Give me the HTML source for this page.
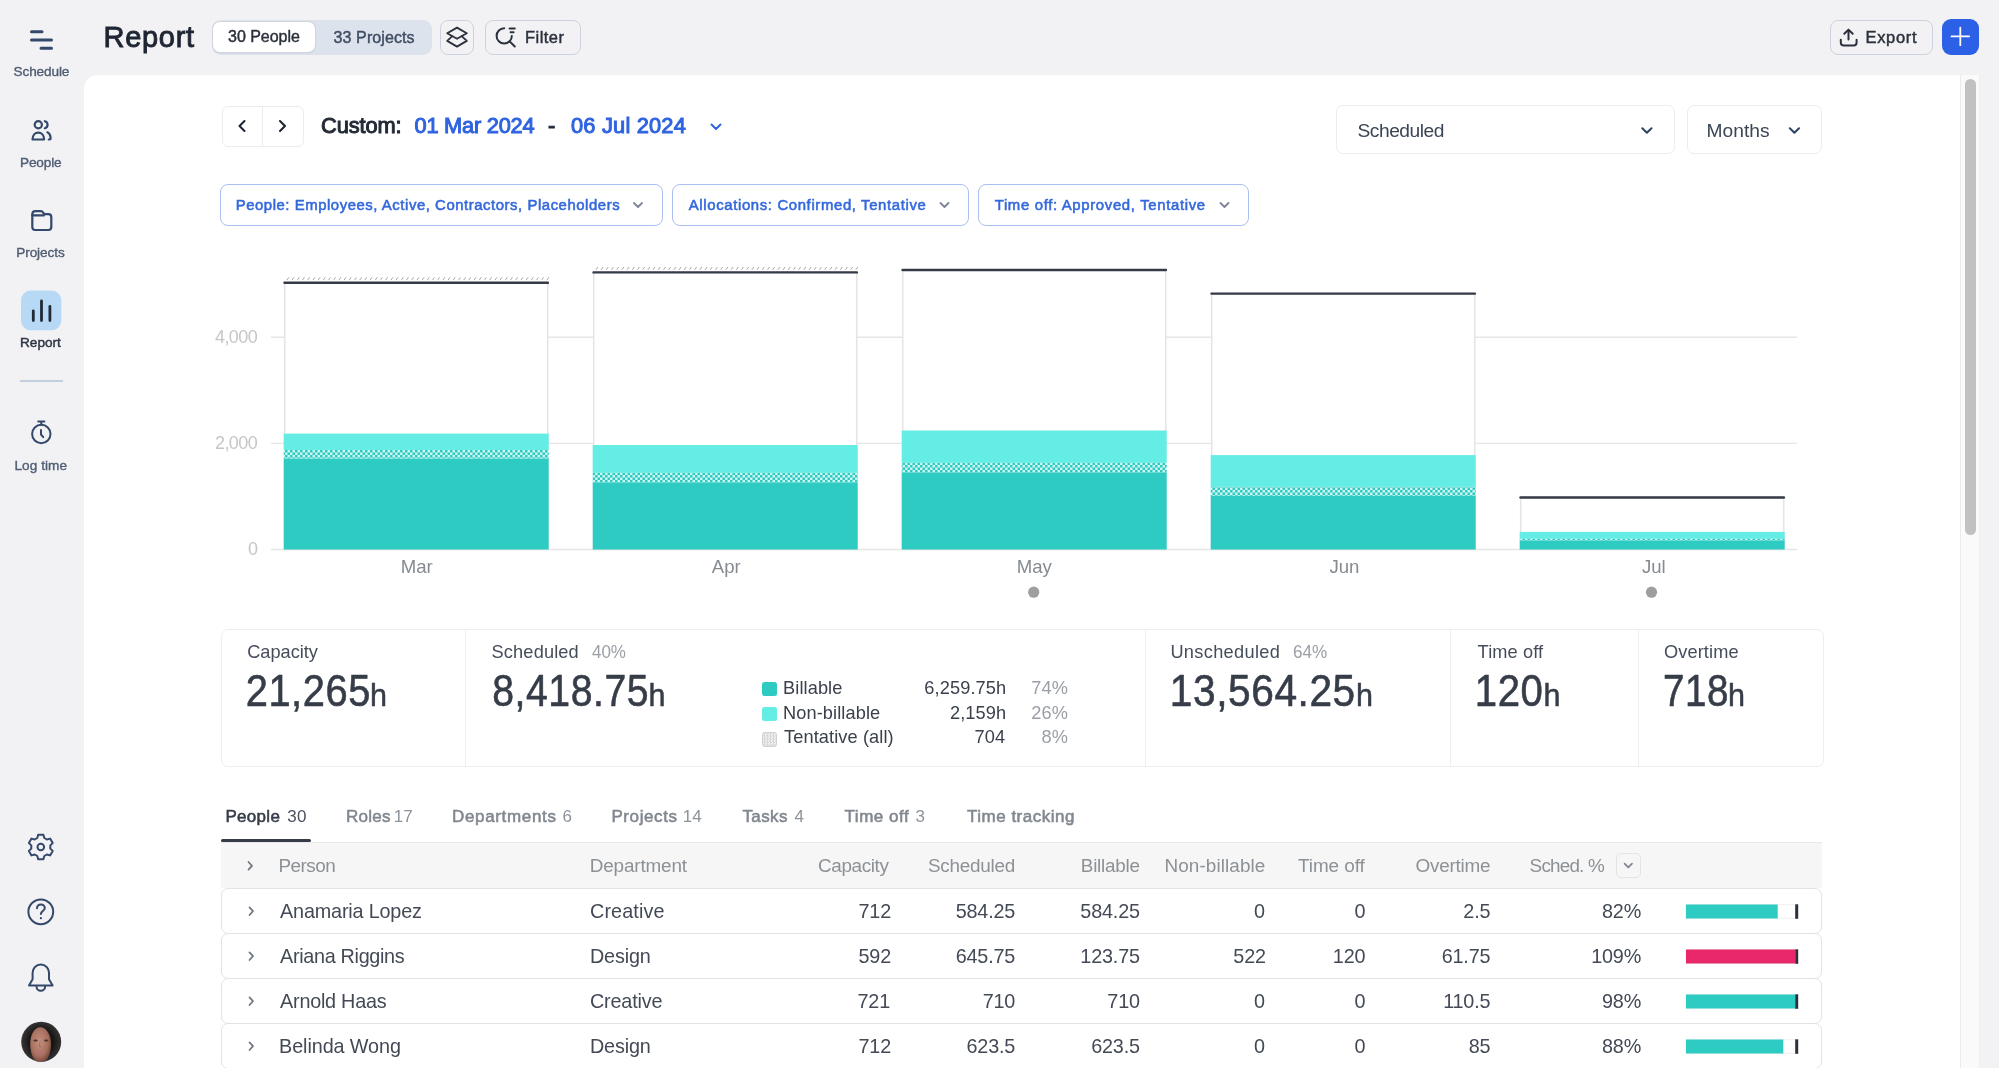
<!DOCTYPE html>
<html><head><meta charset="utf-8">
<style>
*{box-sizing:border-box;margin:0;padding:0}
html,body{width:1999px;height:1068px;overflow:hidden;background:#f2f2f5;font-family:"Liberation Sans",sans-serif}
.box{position:absolute}
svg.layer{position:absolute;left:0;top:0;overflow:visible}
</style></head><body>
<!-- MAIN PANEL -->
<div class="box" style="left:84px;top:75px;width:1876px;height:1000px;background:#fff;border-top-left-radius:14px"></div>
<!-- SCROLLBAR -->
<div class="box" style="left:1960px;top:75px;width:1px;height:993px;background:#ebebeb"></div>
<div class="box" style="left:1961px;top:75px;width:18px;height:993px;background:#fafafa"></div>
<div class="box" style="left:1979px;top:75px;width:1px;height:993px;background:#efefef"></div>
<div class="box" style="left:1965px;top:79px;width:11px;height:456px;border-radius:6px;background:#c1c1c1"></div>

<!-- SIDEBAR ICONS -->
<svg class="layer" width="84" height="1068" fill="none" stroke="#33486a" stroke-width="2.2" stroke-linecap="round" stroke-linejoin="round">
 <path d="M31.5 31.7h10.5M31.5 40h20M41 48.2h10.5" stroke-width="3"/>
 <circle cx="38.3" cy="124.7" r="3.6"/>
 <path d="M44.8 121.2a3.6 3.6 0 0 1 0 7"/>
 <path d="M32.5 139.5c0-4.2 2.6-6.8 5.8-6.8s5.8 2.6 5.8 6.8z"/>
 <path d="M47.4 132.3c1.9 1 3.2 3.6 3.2 6.2 0 .6-.4 1-1 1h-.8"/>
 <path d="M32.3 214.5c0-2 1.2-3.3 3.2-3.3h5.4c.9 0 1.6.4 2.1 1.1l1.2 1.9h4.2c1.7 0 2.9 1.3 2.9 3v9.8c0 1.8-1.2 3-3 3H35.3c-1.8 0-3-1.2-3-3z"/>
 <path d="M32.3 215.4h11.6"/>
 <rect x="21" y="290.6" width="40.3" height="39.6" rx="9.5" fill="#b7d9f5" stroke="none"/>
 <path d="M33.3 311v9.5M41.5 301v19.5M49.9 306.5v14" stroke="#222a36" stroke-width="2.8"/>
 <path d="M20 381h43" stroke="#c3cfde" stroke-width="2" stroke-linecap="butt"/>
 <circle cx="41.3" cy="434" r="9.2" stroke-width="2"/>
 <path d="M38.2 421.6h6.2M41.3 421.6v3.2M41 430v4.5l2.3 2.6" stroke-width="2"/>
 <g transform="translate(40.8 847)" stroke-width="2">
  <path d="M-2.6 -12.2h5.2l.9 3.2 2.6 1.5 3.2-.9 2.6 4.5-2.4 2.3v3.2l2.4 2.3-2.6 4.5-3.2-.9-2.6 1.5-.9 3.2h-5.2l-.9-3.2-2.6-1.5-3.2.9-2.6-4.5 2.4-2.3v-3.2l-2.4-2.3 2.6-4.5 3.2.9 2.6-1.5z"/>
  <circle r="3.3"/>
 </g>
 <circle cx="40.8" cy="911.8" r="12.4" stroke-width="2"/>
 <path d="M37 908.3c0-2.2 1.7-3.8 3.9-3.8s3.9 1.5 3.9 3.6c0 2.8-3.9 3-3.9 5.8" stroke-width="2"/>
 <circle cx="40.9" cy="918.2" r="1.1" fill="#33486a" stroke="none"/>
 <path d="M29 985.5h23.6l-3.6-6.2v-6.5c0-4.6-3.6-8.3-8.2-8.3s-8.2 3.7-8.2 8.3v6.5z" stroke-width="2"/>
 <path d="M36.5 986.5a4.3 4.3 0 0 0 8.6 0" stroke-width="2"/>
</svg>
<svg class="layer" width="84" height="1068">
 <defs>
  <clipPath id="avc"><circle cx="41.2" cy="1041.8" r="20"/></clipPath>
  <radialGradient id="skin" cx="0.45" cy="0.42" r="0.62"><stop offset="0" stop-color="#c4907f"/><stop offset="0.65" stop-color="#a76f5e"/><stop offset="1" stop-color="#6a4034"/></radialGradient>
  <radialGradient id="hair" cx="0.5" cy="0.5" r="0.5"><stop offset="0.55" stop-color="#161313"/><stop offset="1" stop-color="#383636"/></radialGradient>
 </defs>
 <g clip-path="url(#avc)">
  <rect x="21" y="1021" width="41" height="42" fill="url(#hair)"/>
  <path d="M30.2 1044c0-10 4.5-16.8 10.2-16.8s10.7 6.8 10.7 16.8c0 9-3.2 18.5-10.5 18.5s-10.4-9.5-10.4-18.5z" fill="url(#skin)"/>
  <ellipse cx="35.6" cy="1040.6" rx="2.2" ry="1" fill="#4a3534"/>
  <ellipse cx="46.2" cy="1040.6" rx="2.2" ry="1" fill="#4a3534"/>
  <path d="M40.2 1041l-0.9 5.2 2 0.9" stroke="#8f5a4a" stroke-width="0.8" fill="none" opacity="0.7"/>
  <ellipse cx="41" cy="1052.2" rx="3.6" ry="1.3" fill="#b56f78"/>
 </g>
</svg>
<!-- HEADER CONTROLS -->
<div class="box" style="left:212px;top:20px;width:220px;height:35px;border-radius:9px;background:#dde3ec"></div>
<div class="box" style="left:213px;top:22px;width:102px;height:30px;border-radius:7px;background:#fff;box-shadow:0 0 0 1px #cfd6e0,0 1px 2px rgba(0,0,0,.12)"></div>
<div class="box" style="left:440px;top:20px;width:34px;height:35px;border-radius:8px;border:1px solid #ccd3de"></div>
<div class="box" style="left:485px;top:20px;width:96px;height:35px;border-radius:8px;border:1px solid #ccd3de"></div>
<div class="box" style="left:1830px;top:20px;width:103px;height:35px;border-radius:8px;border:1px solid #ccd3de"></div>
<div class="box" style="left:1942px;top:19px;width:37px;height:36px;border-radius:9px;background:#2c60e6"></div>
<svg class="layer" width="1999" height="1068" fill="none" stroke-linecap="round" stroke-linejoin="round">
 <g stroke="#2b313c" stroke-width="2">
  <path d="M457 27.6l9.8 5.7-9.8 5.5-9.8-5.5z" stroke-width="1.8"/><path d="M452.3 36.2l-5.1 4.7 9.8 5.7 9.8-5.7-5.1-4.7" stroke-width="1.8"/>
  <path d="M504.2 28.3A7.6 7.6 0 1 0 511.8 35.9" stroke-width="2"/><path d="M509.6 28.4h5.2M510.6 32.2h3M509.9 41.6l4.9 4.9" stroke-width="2"/>
  <path d="M1840.8 39.8v2.6c0 1.8 1.2 3 3 3h9.8c1.8 0 3-1.2 3-3v-2.6M1848.5 39.5V29.8M1844.3 33.8l4.2-4.2 4.2 4.2" stroke-width="2"/>
 </g>
 <path d="M1960.3 27.6v17.6M1951.5 36.4h17.6" stroke="#fff" stroke-width="1.8"/>
 <!-- date nav chevrons -->
 <path d="M244.5 121l-5 5 5 5M280 121l5 5-5 5" stroke="#1b2130" stroke-width="2"/>
 <path d="M711.5 124.5l4.5 4.5 4.5-4.5" stroke="#2f63e0" stroke-width="2"/>
 <path d="M1642.3 128.2l4.6 4.6 4.6-4.6M1789.8 128.2l4.6 4.6 4.6-4.6" stroke="#2f4566" stroke-width="2"/>
 <path d="M634 203l4 4 4-4M940.5 203l4 4 4-4M1220.5 203l4 4 4-4" stroke="#7d8596" stroke-width="1.8"/>
</svg>

<!-- DATE ROW -->
<div class="box" style="left:221.5px;top:105.5px;width:82px;height:41.5px;border:1px solid #ececec;border-radius:6px"></div>
<div class="box" style="left:261.5px;top:106px;width:1px;height:40.5px;background:#ececec"></div>
<div class="box" style="left:1336px;top:105px;width:338.5px;height:49px;border:1px solid #ebedf1;border-radius:7px"></div>
<div class="box" style="left:1687px;top:105px;width:134.5px;height:49px;border:1px solid #ebedf1;border-radius:7px"></div>
<!-- CHIPS -->
<div class="box" style="left:220.3px;top:184px;width:442.8px;height:41.6px;border:1.8px solid #abbef4;border-radius:8px"></div>
<div class="box" style="left:671.8px;top:184px;width:296.8px;height:41.6px;border:1.8px solid #abbef4;border-radius:8px"></div>
<div class="box" style="left:978px;top:184px;width:270.8px;height:41.6px;border:1.8px solid #abbef4;border-radius:8px"></div>

<!-- <defs><pattern id="chk" width="5" height="5" patternUnits="userSpaceOnUse" x="0" y="0"><rect width="5" height="5" fill="#cdf5f1"/><rect width="2.5" height="2.5" fill="#2ecbc3"/><rect x="2.5" y="2.5" width="2.5" height="2.5" fill="#2ecbc3"/></pattern>
<pattern id="hat" width="5.2" height="10" patternUnits="userSpaceOnUse"><path d="M1.2 3.4L3 0.6" stroke="#b9b9b9" stroke-width="0.9"/></pattern></defs>
<path d="M271 337.25H1797" stroke="#e6e6e6" stroke-width="1.3"/>
<path d="M271 443.40H1797" stroke="#e6e6e6" stroke-width="1.3"/>
<path d="M271 549.50H1797" stroke="#e6e6e6" stroke-width="1.3"/>
<rect x="284.7" y="282.7" width="263.0" height="266.8" fill="#fff" stroke="#e5e5e5" stroke-width="1.6"/>
<path d="M286.90 280.10l1.9 -2.8M292.10 280.10l1.9 -2.8M297.30 280.10l1.9 -2.8M302.50 280.10l1.9 -2.8M307.70 280.10l1.9 -2.8M312.90 280.10l1.9 -2.8M318.10 280.10l1.9 -2.8M323.30 280.10l1.9 -2.8M328.50 280.10l1.9 -2.8M333.70 280.10l1.9 -2.8M338.90 280.10l1.9 -2.8M344.10 280.10l1.9 -2.8M349.30 280.10l1.9 -2.8M354.50 280.10l1.9 -2.8M359.70 280.10l1.9 -2.8M364.90 280.10l1.9 -2.8M370.10 280.10l1.9 -2.8M375.30 280.10l1.9 -2.8M380.50 280.10l1.9 -2.8M385.70 280.10l1.9 -2.8M390.90 280.10l1.9 -2.8M396.10 280.10l1.9 -2.8M401.30 280.10l1.9 -2.8M406.50 280.10l1.9 -2.8M411.70 280.10l1.9 -2.8M416.90 280.10l1.9 -2.8M422.10 280.10l1.9 -2.8M427.30 280.10l1.9 -2.8M432.50 280.10l1.9 -2.8M437.70 280.10l1.9 -2.8M442.90 280.10l1.9 -2.8M448.10 280.10l1.9 -2.8M453.30 280.10l1.9 -2.8M458.50 280.10l1.9 -2.8M463.70 280.10l1.9 -2.8M468.90 280.10l1.9 -2.8M474.10 280.10l1.9 -2.8M479.30 280.10l1.9 -2.8M484.50 280.10l1.9 -2.8M489.70 280.10l1.9 -2.8M494.90 280.10l1.9 -2.8M500.10 280.10l1.9 -2.8M505.30 280.10l1.9 -2.8M510.50 280.10l1.9 -2.8M515.70 280.10l1.9 -2.8M520.90 280.10l1.9 -2.8M526.10 280.10l1.9 -2.8M531.30 280.10l1.9 -2.8M536.50 280.10l1.9 -2.8M541.70 280.10l1.9 -2.8M546.90 280.10l1.9 -2.8" stroke="#a8a8a8" stroke-width="1" fill="none"/>
<rect x="283.7" y="433.60" width="265" height="16.40" fill="#64ede4"/>
<rect x="283.7" y="450.00" width="265" height="8.60" fill="url(#chk)"/>
<rect x="283.7" y="458.60" width="265" height="90.90" fill="#2ecbc3"/>
<path d="M284.5 282.70H547.9" stroke="#343a46" stroke-width="2.4" stroke-linecap="round"/>
<rect x="593.7" y="272.4" width="263.0" height="277.1" fill="#fff" stroke="#e5e5e5" stroke-width="1.6"/>
<path d="M595.90 269.80l1.9 -2.8M601.10 269.80l1.9 -2.8M606.30 269.80l1.9 -2.8M611.50 269.80l1.9 -2.8M616.70 269.80l1.9 -2.8M621.90 269.80l1.9 -2.8M627.10 269.80l1.9 -2.8M632.30 269.80l1.9 -2.8M637.50 269.80l1.9 -2.8M642.70 269.80l1.9 -2.8M647.90 269.80l1.9 -2.8M653.10 269.80l1.9 -2.8M658.30 269.80l1.9 -2.8M663.50 269.80l1.9 -2.8M668.70 269.80l1.9 -2.8M673.90 269.80l1.9 -2.8M679.10 269.80l1.9 -2.8M684.30 269.80l1.9 -2.8M689.50 269.80l1.9 -2.8M694.70 269.80l1.9 -2.8M699.90 269.80l1.9 -2.8M705.10 269.80l1.9 -2.8M710.30 269.80l1.9 -2.8M715.50 269.80l1.9 -2.8M720.70 269.80l1.9 -2.8M725.90 269.80l1.9 -2.8M731.10 269.80l1.9 -2.8M736.30 269.80l1.9 -2.8M741.50 269.80l1.9 -2.8M746.70 269.80l1.9 -2.8M751.90 269.80l1.9 -2.8M757.10 269.80l1.9 -2.8M762.30 269.80l1.9 -2.8M767.50 269.80l1.9 -2.8M772.70 269.80l1.9 -2.8M777.90 269.80l1.9 -2.8M783.10 269.80l1.9 -2.8M788.30 269.80l1.9 -2.8M793.50 269.80l1.9 -2.8M798.70 269.80l1.9 -2.8M803.90 269.80l1.9 -2.8M809.10 269.80l1.9 -2.8M814.30 269.80l1.9 -2.8M819.50 269.80l1.9 -2.8M824.70 269.80l1.9 -2.8M829.90 269.80l1.9 -2.8M835.10 269.80l1.9 -2.8M840.30 269.80l1.9 -2.8M845.50 269.80l1.9 -2.8M850.70 269.80l1.9 -2.8M855.90 269.80l1.9 -2.8" stroke="#a8a8a8" stroke-width="1" fill="none"/>
<rect x="592.7" y="445.00" width="265" height="27.90" fill="#64ede4"/>
<rect x="592.7" y="472.90" width="265" height="9.50" fill="url(#chk)"/>
<rect x="592.7" y="482.40" width="265" height="67.10" fill="#2ecbc3"/>
<path d="M593.5 272.40H856.9" stroke="#343a46" stroke-width="2.4" stroke-linecap="round"/>
<rect x="902.7" y="270.0" width="263.0" height="279.5" fill="#fff" stroke="#e5e5e5" stroke-width="1.6"/>
<rect x="901.7" y="430.50" width="265" height="32.40" fill="#64ede4"/>
<rect x="901.7" y="462.90" width="265" height="9.50" fill="url(#chk)"/>
<rect x="901.7" y="472.40" width="265" height="77.10" fill="#2ecbc3"/>
<path d="M902.5 270.00H1165.9" stroke="#343a46" stroke-width="2.4" stroke-linecap="round"/>
<rect x="1211.7" y="293.6" width="263.0" height="255.9" fill="#fff" stroke="#e5e5e5" stroke-width="1.6"/>
<rect x="1210.7" y="455.10" width="265" height="31.80" fill="#64ede4"/>
<rect x="1210.7" y="486.90" width="265" height="8.80" fill="url(#chk)"/>
<rect x="1210.7" y="495.70" width="265" height="53.80" fill="#2ecbc3"/>
<path d="M1211.5 293.60H1474.9" stroke="#343a46" stroke-width="2.4" stroke-linecap="round"/>
<rect x="1520.7" y="497.5" width="263.0" height="52.0" fill="#fff" stroke="#e5e5e5" stroke-width="1.6"/>
<rect x="1519.7" y="531.90" width="265" height="7.00" fill="#64ede4"/>
<rect x="1519.7" y="538.90" width="265" height="1.50" fill="url(#chk)"/>
<rect x="1519.7" y="540.40" width="265" height="9.10" fill="#2ecbc3"/>
<path d="M1520.5 497.50H1783.9" stroke="#343a46" stroke-width="2.4" stroke-linecap="round"/>
<circle cx="1033.7" cy="592.2" r="5.6" fill="#9e9e9e"/><circle cx="1651.5" cy="592.2" r="5.6" fill="#9e9e9e"/> -->
<svg class="layer" width="1999" height="1068">
<defs><pattern id="chk" width="5" height="5" patternUnits="userSpaceOnUse" x="0" y="0"><rect width="5" height="5" fill="#cdf5f1"/><rect width="2.5" height="2.5" fill="#2ecbc3"/><rect x="2.5" y="2.5" width="2.5" height="2.5" fill="#2ecbc3"/></pattern>
<pattern id="hat" width="5.2" height="10" patternUnits="userSpaceOnUse"><path d="M1.2 3.4L3 0.6" stroke="#b9b9b9" stroke-width="0.9"/></pattern></defs>
<path d="M271 337.25H1797" stroke="#e6e6e6" stroke-width="1.3"/>
<path d="M271 443.40H1797" stroke="#e6e6e6" stroke-width="1.3"/>
<path d="M271 549.50H1797" stroke="#e6e6e6" stroke-width="1.3"/>
<rect x="284.7" y="282.7" width="263.0" height="266.8" fill="#fff" stroke="#e5e5e5" stroke-width="1.6"/>
<path d="M286.90 280.10l1.9 -2.8M292.10 280.10l1.9 -2.8M297.30 280.10l1.9 -2.8M302.50 280.10l1.9 -2.8M307.70 280.10l1.9 -2.8M312.90 280.10l1.9 -2.8M318.10 280.10l1.9 -2.8M323.30 280.10l1.9 -2.8M328.50 280.10l1.9 -2.8M333.70 280.10l1.9 -2.8M338.90 280.10l1.9 -2.8M344.10 280.10l1.9 -2.8M349.30 280.10l1.9 -2.8M354.50 280.10l1.9 -2.8M359.70 280.10l1.9 -2.8M364.90 280.10l1.9 -2.8M370.10 280.10l1.9 -2.8M375.30 280.10l1.9 -2.8M380.50 280.10l1.9 -2.8M385.70 280.10l1.9 -2.8M390.90 280.10l1.9 -2.8M396.10 280.10l1.9 -2.8M401.30 280.10l1.9 -2.8M406.50 280.10l1.9 -2.8M411.70 280.10l1.9 -2.8M416.90 280.10l1.9 -2.8M422.10 280.10l1.9 -2.8M427.30 280.10l1.9 -2.8M432.50 280.10l1.9 -2.8M437.70 280.10l1.9 -2.8M442.90 280.10l1.9 -2.8M448.10 280.10l1.9 -2.8M453.30 280.10l1.9 -2.8M458.50 280.10l1.9 -2.8M463.70 280.10l1.9 -2.8M468.90 280.10l1.9 -2.8M474.10 280.10l1.9 -2.8M479.30 280.10l1.9 -2.8M484.50 280.10l1.9 -2.8M489.70 280.10l1.9 -2.8M494.90 280.10l1.9 -2.8M500.10 280.10l1.9 -2.8M505.30 280.10l1.9 -2.8M510.50 280.10l1.9 -2.8M515.70 280.10l1.9 -2.8M520.90 280.10l1.9 -2.8M526.10 280.10l1.9 -2.8M531.30 280.10l1.9 -2.8M536.50 280.10l1.9 -2.8M541.70 280.10l1.9 -2.8M546.90 280.10l1.9 -2.8" stroke="#a8a8a8" stroke-width="1" fill="none"/>
<rect x="283.7" y="433.60" width="265" height="16.40" fill="#64ede4"/>
<rect x="283.7" y="450.00" width="265" height="8.60" fill="url(#chk)"/>
<rect x="283.7" y="458.60" width="265" height="90.90" fill="#2ecbc3"/>
<path d="M284.5 282.70H547.9" stroke="#343a46" stroke-width="2.4" stroke-linecap="round"/>
<rect x="593.7" y="272.4" width="263.0" height="277.1" fill="#fff" stroke="#e5e5e5" stroke-width="1.6"/>
<path d="M595.90 269.80l1.9 -2.8M601.10 269.80l1.9 -2.8M606.30 269.80l1.9 -2.8M611.50 269.80l1.9 -2.8M616.70 269.80l1.9 -2.8M621.90 269.80l1.9 -2.8M627.10 269.80l1.9 -2.8M632.30 269.80l1.9 -2.8M637.50 269.80l1.9 -2.8M642.70 269.80l1.9 -2.8M647.90 269.80l1.9 -2.8M653.10 269.80l1.9 -2.8M658.30 269.80l1.9 -2.8M663.50 269.80l1.9 -2.8M668.70 269.80l1.9 -2.8M673.90 269.80l1.9 -2.8M679.10 269.80l1.9 -2.8M684.30 269.80l1.9 -2.8M689.50 269.80l1.9 -2.8M694.70 269.80l1.9 -2.8M699.90 269.80l1.9 -2.8M705.10 269.80l1.9 -2.8M710.30 269.80l1.9 -2.8M715.50 269.80l1.9 -2.8M720.70 269.80l1.9 -2.8M725.90 269.80l1.9 -2.8M731.10 269.80l1.9 -2.8M736.30 269.80l1.9 -2.8M741.50 269.80l1.9 -2.8M746.70 269.80l1.9 -2.8M751.90 269.80l1.9 -2.8M757.10 269.80l1.9 -2.8M762.30 269.80l1.9 -2.8M767.50 269.80l1.9 -2.8M772.70 269.80l1.9 -2.8M777.90 269.80l1.9 -2.8M783.10 269.80l1.9 -2.8M788.30 269.80l1.9 -2.8M793.50 269.80l1.9 -2.8M798.70 269.80l1.9 -2.8M803.90 269.80l1.9 -2.8M809.10 269.80l1.9 -2.8M814.30 269.80l1.9 -2.8M819.50 269.80l1.9 -2.8M824.70 269.80l1.9 -2.8M829.90 269.80l1.9 -2.8M835.10 269.80l1.9 -2.8M840.30 269.80l1.9 -2.8M845.50 269.80l1.9 -2.8M850.70 269.80l1.9 -2.8M855.90 269.80l1.9 -2.8" stroke="#a8a8a8" stroke-width="1" fill="none"/>
<rect x="592.7" y="445.00" width="265" height="27.90" fill="#64ede4"/>
<rect x="592.7" y="472.90" width="265" height="9.50" fill="url(#chk)"/>
<rect x="592.7" y="482.40" width="265" height="67.10" fill="#2ecbc3"/>
<path d="M593.5 272.40H856.9" stroke="#343a46" stroke-width="2.4" stroke-linecap="round"/>
<rect x="902.7" y="270.0" width="263.0" height="279.5" fill="#fff" stroke="#e5e5e5" stroke-width="1.6"/>
<rect x="901.7" y="430.50" width="265" height="32.40" fill="#64ede4"/>
<rect x="901.7" y="462.90" width="265" height="9.50" fill="url(#chk)"/>
<rect x="901.7" y="472.40" width="265" height="77.10" fill="#2ecbc3"/>
<path d="M902.5 270.00H1165.9" stroke="#343a46" stroke-width="2.4" stroke-linecap="round"/>
<rect x="1211.7" y="293.6" width="263.0" height="255.9" fill="#fff" stroke="#e5e5e5" stroke-width="1.6"/>
<rect x="1210.7" y="455.10" width="265" height="31.80" fill="#64ede4"/>
<rect x="1210.7" y="486.90" width="265" height="8.80" fill="url(#chk)"/>
<rect x="1210.7" y="495.70" width="265" height="53.80" fill="#2ecbc3"/>
<path d="M1211.5 293.60H1474.9" stroke="#343a46" stroke-width="2.4" stroke-linecap="round"/>
<rect x="1520.7" y="497.5" width="263.0" height="52.0" fill="#fff" stroke="#e5e5e5" stroke-width="1.6"/>
<rect x="1519.7" y="531.90" width="265" height="7.00" fill="#64ede4"/>
<rect x="1519.7" y="538.90" width="265" height="1.50" fill="url(#chk)"/>
<rect x="1519.7" y="540.40" width="265" height="9.10" fill="#2ecbc3"/>
<path d="M1520.5 497.50H1783.9" stroke="#343a46" stroke-width="2.4" stroke-linecap="round"/>
<circle cx="1033.7" cy="592.2" r="5.6" fill="#9e9e9e"/><circle cx="1651.5" cy="592.2" r="5.6" fill="#9e9e9e"/>
</svg>

<!-- SUMMARY -->
<div class="box" style="left:221px;top:628.5px;width:1602.5px;height:138px;border:1px solid #eeeeee;border-radius:7px"></div>
<div class="box" style="left:464.5px;top:629px;width:1px;height:137px;background:#eeeeee"></div>
<div class="box" style="left:1144.8px;top:629px;width:1px;height:137px;background:#eeeeee"></div>
<div class="box" style="left:1450.3px;top:629px;width:1px;height:137px;background:#eeeeee"></div>
<div class="box" style="left:1638px;top:629px;width:1px;height:137px;background:#eeeeee"></div>
<div class="box" style="left:761.6px;top:681.9px;width:15.3px;height:14.5px;border-radius:2.5px;background:#2ecbc3"></div>
<div class="box" style="left:761.6px;top:706.6px;width:15.3px;height:14.5px;border-radius:2.5px;background:#64ede4"></div>
<div class="box" style="left:761.6px;top:732px;width:15.3px;height:14.5px;border-radius:2.5px;background:repeating-conic-gradient(#d9d9d9 0 25%,#efefef 0 50%) 0 0/3px 3px;border:1px solid #d0d0d0"></div>

<!-- TABS -->
<div class="box" style="left:221px;top:842px;width:1601px;height:1px;background:#e8e8e8"></div>
<div class="box" style="left:221px;top:838.6px;width:90px;height:3.6px;border-radius:2px;background:#353c48"></div>
<!-- TABLE -->
<div class="box" style="left:221px;top:843px;width:1601px;height:45px;background:#f6f6f6"></div>
<div class="box" style="left:1616.2px;top:853.2px;width:24.4px;height:24.4px;border:1px solid #e4e4e4;border-radius:5px"></div>
<div class="box" style="left:221px;top:888.0px;width:1601px;height:46px;border:1px solid #e3e3e3;border-radius:7px;background:#fff"></div>
<div class="box" style="left:221px;top:933.0px;width:1601px;height:46px;border:1px solid #e3e3e3;border-radius:7px;background:#fff"></div>
<div class="box" style="left:221px;top:978.0px;width:1601px;height:46px;border:1px solid #e3e3e3;border-radius:7px;background:#fff"></div>
<div class="box" style="left:221px;top:1023.0px;width:1601px;height:46px;border:1px solid #e3e3e3;border-radius:7px;background:#fff"></div>
<svg class="layer" width="1999" height="1068">
<rect x="1686" y="904.7" width="110" height="13.6" fill="#fff" stroke="#f0f0f0" stroke-width="1"/>
<rect x="1686" y="904.5" width="91.7" height="14" fill="#2ecbc3"/>
<rect x="1795.2" y="904.3" width="3" height="14.5" fill="#2b313c"/>
<path d="M249.5 907.4l3.5 3.8-3.5 3.8" fill="none" stroke="#6f7680" stroke-width="1.7" stroke-linecap="round" stroke-linejoin="round"/>
<rect x="1686" y="949.7" width="110" height="13.6" fill="#fff" stroke="#f0f0f0" stroke-width="1"/>
<rect x="1686" y="949.5" width="109.0" height="14" fill="#e8286a"/>
<rect x="1795.2" y="949.3" width="3" height="14.5" fill="#2b313c"/>
<path d="M249.5 952.4l3.5 3.8-3.5 3.8" fill="none" stroke="#6f7680" stroke-width="1.7" stroke-linecap="round" stroke-linejoin="round"/>
<rect x="1686" y="994.7" width="110" height="13.6" fill="#fff" stroke="#f0f0f0" stroke-width="1"/>
<rect x="1686" y="994.5" width="109.0" height="14" fill="#2ecbc3"/>
<rect x="1795.2" y="994.3" width="3" height="14.5" fill="#2b313c"/>
<path d="M249.5 997.4l3.5 3.8-3.5 3.8" fill="none" stroke="#6f7680" stroke-width="1.7" stroke-linecap="round" stroke-linejoin="round"/>
<rect x="1686" y="1039.7" width="110" height="13.6" fill="#fff" stroke="#f0f0f0" stroke-width="1"/>
<rect x="1686" y="1039.5" width="97.3" height="14" fill="#2ecbc3"/>
<rect x="1795.2" y="1039.3" width="3" height="14.5" fill="#2b313c"/>
<path d="M249.5 1042.4l3.5 3.8-3.5 3.8" fill="none" stroke="#6f7680" stroke-width="1.7" stroke-linecap="round" stroke-linejoin="round"/>
<path d="M248.5 862l3.5 3.8-3.5 3.8" fill="none" stroke="#6f7680" stroke-width="1.7" stroke-linecap="round" stroke-linejoin="round"/>
<path d="M1624.6 863.6l3.7 3.7 3.7-3.7" fill="none" stroke="#7d848c" stroke-width="1.7" stroke-linecap="round" stroke-linejoin="round"/>
</svg>

<!-- TEXTS -->
<svg class="layer" width="1999" height="1068" style="font-family:'Liberation Sans',sans-serif;will-change:transform">
<text x="13.50" y="76.40" style="font-size:13.60px;fill:#4f5c72;stroke:#4f5c72;stroke-width:0.37px;letter-spacing:-0.118px">Schedule</text>
<text x="20.00" y="166.90" style="font-size:13.60px;fill:#4f5c72;stroke:#4f5c72;stroke-width:0.37px;letter-spacing:-0.154px">People</text>
<text x="16.20" y="257.30" style="font-size:13.60px;fill:#4f5c72;stroke:#4f5c72;stroke-width:0.37px;letter-spacing:-0.073px">Projects</text>
<text x="20.00" y="347.00" style="font-size:13.60px;fill:#2d3442;stroke:#2d3442;stroke-width:0.44px">Report</text>
<text x="14.50" y="470.00" style="font-size:13.60px;fill:#4f5c72;stroke:#4f5c72;stroke-width:0.37px;letter-spacing:0.060px">Log time</text>
<text x="103.60" y="47.10" style="font-size:29.00px;fill:#1f2633;stroke:#1f2633;stroke-width:0.93px;letter-spacing:0.683px">Report</text>
<text x="228.00" y="42.25" style="font-size:16.00px;fill:#2b313c;stroke:#2b313c;stroke-width:0.43px;letter-spacing:-0.021px">30 People</text>
<text x="333.60" y="43.00" style="font-size:16.00px;fill:#3f4d63;stroke:#3f4d63;stroke-width:0.43px;letter-spacing:0.096px">33 Projects</text>
<text x="525.00" y="42.80" style="font-size:16.50px;fill:#2b313c;stroke:#2b313c;stroke-width:0.45px;letter-spacing:0.466px">Filter</text>
<text x="1865.50" y="43.00" style="font-size:16.50px;fill:#2b313c;stroke:#2b313c;stroke-width:0.45px;letter-spacing:0.679px">Export</text>
<text x="321.00" y="133.30" style="font-size:21.80px;fill:#222a36;stroke:#222a36;stroke-width:1.00px;letter-spacing:-0.100px">Custom:</text>
<text x="414.50" y="133.30" style="font-size:21.80px;fill:#2f63e0;stroke:#2f63e0;stroke-width:1.00px;letter-spacing:-0.226px">01 Mar 2024</text>
<text x="548.00" y="133.30" style="font-size:21.80px;fill:#222a36;stroke:#222a36;stroke-width:1.00px">-</text>
<text x="571.00" y="133.30" style="font-size:21.80px;fill:#2f63e0;stroke:#2f63e0;stroke-width:1.00px;letter-spacing:0.211px">06 Jul 2024</text>
<text x="1357.50" y="137.00" style="font-size:19.20px;fill:#3a4556;letter-spacing:-0.476px">Scheduled</text>
<text x="1706.50" y="137.00" style="font-size:19.20px;fill:#3a4556;letter-spacing:0.034px">Months</text>
<text x="235.70" y="209.90" style="font-size:14.90px;fill:#3468dc;stroke:#3468dc;stroke-width:0.55px;letter-spacing:0.549px">People: Employees, Active, Contractors, Placeholders</text>
<text x="688.80" y="209.90" style="font-size:14.90px;fill:#3468dc;stroke:#3468dc;stroke-width:0.55px;letter-spacing:0.639px">Allocations: Confirmed, Tentative</text>
<text x="994.70" y="209.90" style="font-size:14.90px;fill:#3468dc;stroke:#3468dc;stroke-width:0.55px;letter-spacing:0.665px">Time off: Approved, Tentative</text>
<text x="215.00" y="342.75" style="font-size:18.00px;fill:#c6c6c6;letter-spacing:-0.571px">4,000</text>
<text x="215.00" y="448.90" style="font-size:18.00px;fill:#c6c6c6;letter-spacing:-0.571px">2,000</text>
<text x="248.00" y="555.30" style="font-size:18.00px;fill:#c6c6c6;letter-spacing:-0.571px">0</text>
<text x="400.79" y="572.90" style="font-size:18.60px;fill:#858b91">Mar</text>
<text x="711.83" y="572.90" style="font-size:18.60px;fill:#858b91">Apr</text>
<text x="1016.79" y="572.90" style="font-size:18.60px;fill:#858b91">May</text>
<text x="1329.38" y="572.90" style="font-size:18.60px;fill:#858b91">Jun</text>
<text x="1641.88" y="572.90" style="font-size:18.60px;fill:#858b91">Jul</text>
<text x="247.20" y="657.90" style="font-size:18.20px;fill:#454d5a;letter-spacing:-0.010px">Capacity</text>
<text transform="translate(245.69 706.10) scale(0.9060 1)" style="font-size:44.00px;fill:#363d48;stroke:#363d48;stroke-width:0.60px;letter-spacing:0.600px">21,265</text>
<text x="370.00" y="706.30" style="font-size:30.50px;fill:#363d48;stroke:#363d48;stroke-width:0.50px">h</text>
<text x="491.60" y="657.70" style="font-size:18.20px;fill:#454d5a;letter-spacing:0.145px">Scheduled</text>
<text transform="translate(592.00 657.70) scale(0.9329 1)" style="font-size:18.20px;fill:#9a9fa6">40%</text>
<text transform="translate(492.31 706.10) scale(0.8902 1)" style="font-size:44.00px;fill:#363d48;stroke:#363d48;stroke-width:0.60px;letter-spacing:0.600px">8,418.75</text>
<text x="648.50" y="706.30" style="font-size:30.50px;fill:#363d48;stroke:#363d48;stroke-width:0.50px">h</text>
<text x="783.00" y="693.80" style="font-size:18.20px;fill:#3a414c;letter-spacing:0.106px">Billable</text>
<text x="924.35" y="693.80" style="font-size:18.20px;fill:#3a414c;letter-spacing:0.106px">6,259.75h</text>
<text x="1031.26" y="693.80" style="font-size:18.20px;fill:#9a9fa6;letter-spacing:0.106px">74%</text>
<text x="783.00" y="718.50" style="font-size:18.20px;fill:#3a414c;letter-spacing:0.106px">Non-billable</text>
<text x="949.96" y="718.50" style="font-size:18.20px;fill:#3a414c;letter-spacing:0.106px">2,159h</text>
<text x="1031.26" y="718.50" style="font-size:18.20px;fill:#9a9fa6;letter-spacing:0.106px">26%</text>
<text x="784.00" y="743.00" style="font-size:18.20px;fill:#3a414c;letter-spacing:0.106px">Tentative (all)</text>
<text x="974.56" y="743.00" style="font-size:18.20px;fill:#3a414c;letter-spacing:0.106px">704</text>
<text x="1041.48" y="743.00" style="font-size:18.20px;fill:#9a9fa6;letter-spacing:0.106px">8%</text>
<text x="1170.40" y="657.90" style="font-size:18.20px;fill:#454d5a;letter-spacing:0.335px">Unscheduled</text>
<text transform="translate(1293.00 657.90) scale(0.9412 1)" style="font-size:18.20px;fill:#9a9fa6">64%</text>
<text transform="translate(1169.83 706.10) scale(0.9247 1)" style="font-size:44.00px;fill:#363d48;stroke:#363d48;stroke-width:0.60px;letter-spacing:0.600px">13,564.25</text>
<text x="1356.00" y="706.30" style="font-size:30.50px;fill:#363d48;stroke:#363d48;stroke-width:0.50px">h</text>
<text x="1477.60" y="658.00" style="font-size:18.20px;fill:#454d5a;letter-spacing:0.110px">Time off</text>
<text transform="translate(1474.86 706.10) scale(0.9124 1)" style="font-size:44.00px;fill:#363d48;stroke:#363d48;stroke-width:0.60px;letter-spacing:0.600px">120</text>
<text x="1543.60" y="706.30" style="font-size:30.50px;fill:#363d48;stroke:#363d48;stroke-width:0.50px">h</text>
<text x="1664.00" y="658.00" style="font-size:18.20px;fill:#454d5a;letter-spacing:0.106px">Overtime</text>
<text transform="translate(1663.05 706.10) scale(0.8771 1)" style="font-size:44.00px;fill:#363d48;stroke:#363d48;stroke-width:0.60px;letter-spacing:0.600px">718</text>
<text x="1728.00" y="706.30" style="font-size:30.50px;fill:#363d48;stroke:#363d48;stroke-width:0.50px">h</text>
<text x="225.40" y="821.70" style="font-size:17.00px;fill:#343b47;stroke:#343b47;stroke-width:0.54px;letter-spacing:0.304px">People</text>
<text x="287.20" y="821.70" style="font-size:17.00px;fill:#4a525e;letter-spacing:0.345px">30</text>
<text x="346.00" y="821.70" style="font-size:17.00px;fill:#80878f;stroke:#80878f;stroke-width:0.54px;letter-spacing:0.259px">Roles</text>
<text x="393.67" y="821.70" style="font-size:17.00px;fill:#8d939a;letter-spacing:0.200px">17</text>
<text x="452.00" y="821.70" style="font-size:17.00px;fill:#80878f;stroke:#80878f;stroke-width:0.54px;letter-spacing:0.658px">Departments</text>
<text x="562.50" y="821.70" style="font-size:17.00px;fill:#8d939a;letter-spacing:0.200px">6</text>
<text x="611.40" y="821.70" style="font-size:17.00px;fill:#80878f;stroke:#80878f;stroke-width:0.54px;letter-spacing:0.599px">Projects</text>
<text x="682.67" y="821.70" style="font-size:17.00px;fill:#8d939a;letter-spacing:0.200px">14</text>
<text x="742.40" y="821.70" style="font-size:17.00px;fill:#80878f;stroke:#80878f;stroke-width:0.54px;letter-spacing:0.411px">Tasks</text>
<text x="794.50" y="821.70" style="font-size:17.00px;fill:#8d939a;letter-spacing:0.200px">4</text>
<text x="844.60" y="821.70" style="font-size:17.00px;fill:#80878f;stroke:#80878f;stroke-width:0.54px;letter-spacing:0.523px">Time off</text>
<text x="915.50" y="821.70" style="font-size:17.00px;fill:#8d939a;letter-spacing:0.200px">3</text>
<text x="967.00" y="821.70" style="font-size:17.00px;fill:#80878f;stroke:#80878f;stroke-width:0.54px;letter-spacing:0.505px">Time tracking</text>
<text x="278.40" y="872.00" style="font-size:18.90px;fill:#8c9196;letter-spacing:-0.490px">Person</text>
<text x="589.80" y="872.00" style="font-size:18.90px;fill:#8c9196;letter-spacing:-0.161px">Department</text>
<text x="818.00" y="872.00" style="font-size:18.90px;fill:#8c9196;letter-spacing:-0.379px">Capacity</text>
<text x="927.90" y="872.00" style="font-size:18.90px;fill:#8c9196;letter-spacing:-0.234px">Scheduled</text>
<text x="1080.80" y="872.00" style="font-size:18.90px;fill:#8c9196;letter-spacing:-0.243px">Billable</text>
<text x="1164.50" y="872.00" style="font-size:18.90px;fill:#8c9196;letter-spacing:0.095px">Non-billable</text>
<text x="1298.00" y="872.00" style="font-size:18.90px;fill:#8c9196;letter-spacing:-0.063px">Time off</text>
<text x="1415.50" y="872.00" style="font-size:18.90px;fill:#8c9196;letter-spacing:-0.231px">Overtime</text>
<text x="1529.60" y="872.00" style="font-size:18.90px;fill:#8c9196;letter-spacing:-0.809px">Sched. %</text>
<text x="280.10" y="917.60" style="font-size:19.80px;fill:#434a55;letter-spacing:-0.174px">Anamaria Lopez</text>
<text x="590.00" y="917.60" style="font-size:19.80px;fill:#434a55;letter-spacing:0.106px">Creative</text>
<text x="858.55" y="917.60" style="font-size:19.80px;fill:#434a55;letter-spacing:-0.174px">712</text>
<text x="955.67" y="917.60" style="font-size:19.80px;fill:#434a55;letter-spacing:-0.174px">584.25</text>
<text x="1080.37" y="917.60" style="font-size:19.80px;fill:#434a55;letter-spacing:-0.174px">584.25</text>
<text x="1254.00" y="917.60" style="font-size:19.80px;fill:#434a55;letter-spacing:-0.174px">0</text>
<text x="1354.50" y="917.60" style="font-size:19.80px;fill:#434a55;letter-spacing:-0.174px">0</text>
<text x="1463.35" y="917.60" style="font-size:19.80px;fill:#434a55;letter-spacing:-0.174px">2.5</text>
<text x="1602.05" y="917.60" style="font-size:19.80px;fill:#434a55;letter-spacing:-0.174px">82%</text>
<text x="280.10" y="962.60" style="font-size:19.80px;fill:#434a55;letter-spacing:-0.312px">Ariana Riggins</text>
<text x="590.00" y="962.60" style="font-size:19.80px;fill:#434a55;letter-spacing:-0.174px">Design</text>
<text x="858.55" y="962.60" style="font-size:19.80px;fill:#434a55;letter-spacing:-0.174px">592</text>
<text x="955.67" y="962.60" style="font-size:19.80px;fill:#434a55;letter-spacing:-0.174px">645.75</text>
<text x="1080.37" y="962.60" style="font-size:19.80px;fill:#434a55;letter-spacing:-0.174px">123.75</text>
<text x="1233.35" y="962.60" style="font-size:19.80px;fill:#434a55;letter-spacing:-0.174px">522</text>
<text x="1332.85" y="962.60" style="font-size:19.80px;fill:#434a55;letter-spacing:-0.174px">120</text>
<text x="1441.70" y="962.60" style="font-size:19.80px;fill:#434a55;letter-spacing:-0.174px">61.75</text>
<text x="1591.22" y="962.60" style="font-size:19.80px;fill:#434a55;letter-spacing:-0.174px">109%</text>
<text x="280.10" y="1007.60" style="font-size:19.80px;fill:#434a55;letter-spacing:-0.236px">Arnold Haas</text>
<text x="590.00" y="1007.60" style="font-size:19.80px;fill:#434a55;letter-spacing:-0.174px">Creative</text>
<text x="857.55" y="1007.60" style="font-size:19.80px;fill:#434a55;letter-spacing:-0.174px">721</text>
<text x="982.65" y="1007.60" style="font-size:19.80px;fill:#434a55;letter-spacing:-0.174px">710</text>
<text x="1107.35" y="1007.60" style="font-size:19.80px;fill:#434a55;letter-spacing:-0.174px">710</text>
<text x="1254.00" y="1007.60" style="font-size:19.80px;fill:#434a55;letter-spacing:-0.174px">0</text>
<text x="1354.50" y="1007.60" style="font-size:19.80px;fill:#434a55;letter-spacing:-0.174px">0</text>
<text x="1443.16" y="1007.60" style="font-size:19.80px;fill:#434a55;letter-spacing:-0.174px">110.5</text>
<text x="1602.05" y="1007.60" style="font-size:19.80px;fill:#434a55;letter-spacing:-0.174px">98%</text>
<text x="279.10" y="1052.60" style="font-size:19.80px;fill:#434a55;letter-spacing:-0.091px">Belinda Wong</text>
<text x="590.00" y="1052.60" style="font-size:19.80px;fill:#434a55;letter-spacing:-0.174px">Design</text>
<text x="858.55" y="1052.60" style="font-size:19.80px;fill:#434a55;letter-spacing:-0.174px">712</text>
<text x="966.50" y="1052.60" style="font-size:19.80px;fill:#434a55;letter-spacing:-0.174px">623.5</text>
<text x="1091.20" y="1052.60" style="font-size:19.80px;fill:#434a55;letter-spacing:-0.174px">623.5</text>
<text x="1254.00" y="1052.60" style="font-size:19.80px;fill:#434a55;letter-spacing:-0.174px">0</text>
<text x="1354.50" y="1052.60" style="font-size:19.80px;fill:#434a55;letter-spacing:-0.174px">0</text>
<text x="1468.67" y="1052.60" style="font-size:19.80px;fill:#434a55;letter-spacing:-0.174px">85</text>
<text x="1602.05" y="1052.60" style="font-size:19.80px;fill:#434a55;letter-spacing:-0.174px">88%</text>
</svg>
</body></html>
